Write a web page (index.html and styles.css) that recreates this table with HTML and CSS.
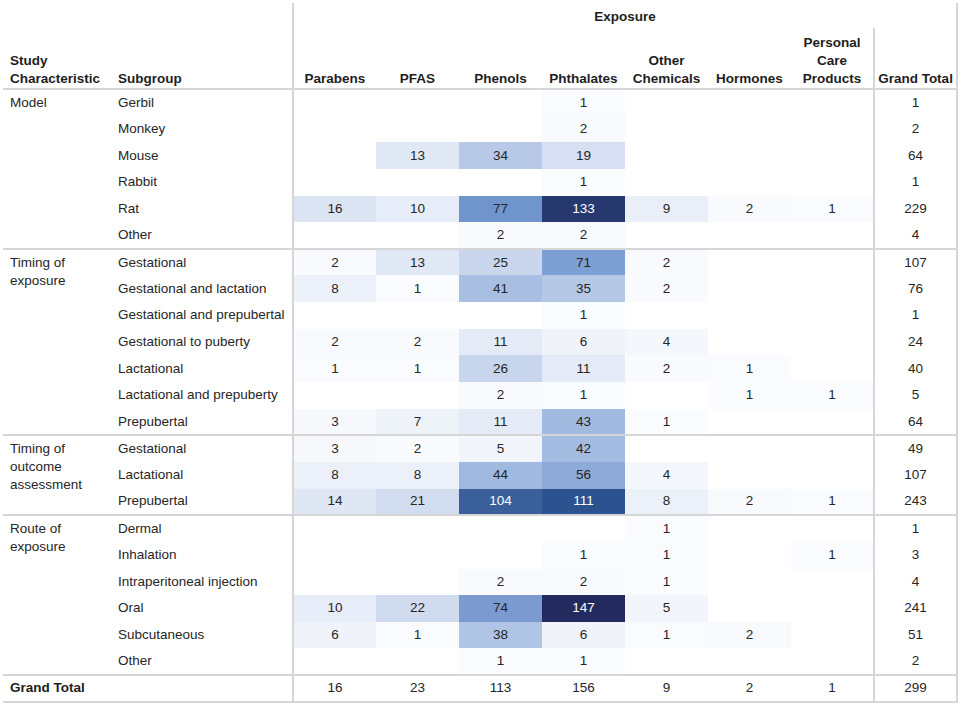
FILE: index.html
```html
<!DOCTYPE html>
<html lang="en">
<head>
<meta charset="utf-8">
<title>Study characteristics by exposure</title>
<link rel="stylesheet" href="styles.css">
</head>
<body>
<table class="pivot">
  <colgroup>
    <col class="c-char"><col class="c-sub">
    <col class="c-num"><col class="c-num"><col class="c-num"><col class="c-num">
    <col class="c-num"><col class="c-num"><col class="c-num"><col class="c-num">
  </colgroup>
  <thead>
    <tr class="h1">
      <th class="lbl" rowspan="2">Study<br>Characteristic</th>
      <th class="lbl" rowspan="2">Subgroup</th>
      <th class="expo" colspan="8">Exposure</th>
    </tr>
    <tr class="h2">
      <th class="col first">Parabens</th>
      <th class="col">PFAS</th>
      <th class="col">Phenols</th>
      <th class="col">Phthalates</th>
      <th class="col">Other<br>Chemicals</th>
      <th class="col">Hormones</th>
      <th class="col">Personal<br>Care<br>Products</th>
      <th class="col gt">Grand Total</th>
    </tr>
  </thead>
  <tbody>
    <tr class="grp"><td class="char" rowspan="6">Model</td><td class="sub">Gerbil</td><td class="n first"></td><td class="n"></td><td class="n"></td><td class="n" style="background:#fafbfe">1</td><td class="n"></td><td class="n"></td><td class="n"></td><td class="n gt">1</td></tr>
    <tr><td class="sub">Monkey</td><td class="n first"></td><td class="n"></td><td class="n"></td><td class="n" style="background:#f8fafd">2</td><td class="n"></td><td class="n"></td><td class="n"></td><td class="n gt">2</td></tr>
    <tr><td class="sub">Mouse</td><td class="n first"></td><td class="n" style="background:#e1e8f5">13</td><td class="n" style="background:#b7c9e7">34</td><td class="n" style="background:#d6e0f2">19</td><td class="n"></td><td class="n"></td><td class="n"></td><td class="n gt">64</td></tr>
    <tr><td class="sub">Rabbit</td><td class="n first"></td><td class="n"></td><td class="n"></td><td class="n" style="background:#fafbfe">1</td><td class="n"></td><td class="n"></td><td class="n"></td><td class="n gt">1</td></tr>
    <tr><td class="sub">Rat</td><td class="n first" style="background:#dbe4f3">16</td><td class="n" style="background:#e7edf8">10</td><td class="n" style="background:#7095cd">77</td><td class="n dk" style="background:#27386e">133</td><td class="n" style="background:#e9eef8">9</td><td class="n" style="background:#f8fafd">2</td><td class="n" style="background:#fafbfe">1</td><td class="n gt">229</td></tr>
    <tr><td class="sub">Other</td><td class="n first"></td><td class="n"></td><td class="n" style="background:#f8fafd">2</td><td class="n" style="background:#f8fafd">2</td><td class="n"></td><td class="n"></td><td class="n"></td><td class="n gt">4</td></tr>

    <tr class="grp"><td class="char" rowspan="7">Timing of<br>exposure</td><td class="sub">Gestational</td><td class="n first" style="background:#f8fafd">2</td><td class="n" style="background:#e1e8f5">13</td><td class="n" style="background:#c9d6ed">25</td><td class="n" style="background:#7e9fd3">71</td><td class="n" style="background:#f8fafd">2</td><td class="n"></td><td class="n"></td><td class="n gt">107</td></tr>
    <tr><td class="sub">Gestational and lactation</td><td class="n first" style="background:#ecf1f9">8</td><td class="n" style="background:#fafbfe">1</td><td class="n" style="background:#a8bee2">41</td><td class="n" style="background:#b5c8e6">35</td><td class="n" style="background:#f8fafd">2</td><td class="n"></td><td class="n"></td><td class="n gt">76</td></tr>
    <tr><td class="sub">Gestational and prepubertal</td><td class="n first"></td><td class="n"></td><td class="n"></td><td class="n" style="background:#fafbfe">1</td><td class="n"></td><td class="n"></td><td class="n"></td><td class="n gt">1</td></tr>
    <tr><td class="sub">Gestational to puberty</td><td class="n first" style="background:#f8fafd">2</td><td class="n" style="background:#f8fafd">2</td><td class="n" style="background:#e4eaf6">11</td><td class="n" style="background:#f0f4fa">6</td><td class="n" style="background:#f4f7fc">4</td><td class="n"></td><td class="n"></td><td class="n gt">24</td></tr>
    <tr><td class="sub">Lactational</td><td class="n first" style="background:#fafbfe">1</td><td class="n" style="background:#fafbfe">1</td><td class="n" style="background:#c7d5ed">26</td><td class="n" style="background:#e4eaf6">11</td><td class="n" style="background:#f8fafd">2</td><td class="n" style="background:#fafbfe">1</td><td class="n"></td><td class="n gt">40</td></tr>
    <tr><td class="sub">Lactational and prepuberty</td><td class="n first"></td><td class="n"></td><td class="n" style="background:#f8fafd">2</td><td class="n" style="background:#fafbfe">1</td><td class="n"></td><td class="n" style="background:#fafbfe">1</td><td class="n" style="background:#fafbfe">1</td><td class="n gt">5</td></tr>
    <tr><td class="sub">Prepubertal</td><td class="n first" style="background:#f6f8fc">3</td><td class="n" style="background:#eef2f9">7</td><td class="n" style="background:#e4eaf6">11</td><td class="n" style="background:#a2bae0">43</td><td class="n" style="background:#fafbfe">1</td><td class="n"></td><td class="n"></td><td class="n gt">64</td></tr>

    <tr class="grp"><td class="char" rowspan="3">Timing of<br>outcome<br>assessment</td><td class="sub">Gestational</td><td class="n first" style="background:#f6f8fc">3</td><td class="n" style="background:#f8fafd">2</td><td class="n" style="background:#f2f5fb">5</td><td class="n" style="background:#a4bce1">42</td><td class="n"></td><td class="n"></td><td class="n"></td><td class="n gt">49</td></tr>
    <tr><td class="sub">Lactational</td><td class="n first" style="background:#ecf1f9">8</td><td class="n" style="background:#ecf1f9">8</td><td class="n" style="background:#a0b9df">44</td><td class="n" style="background:#8eaad9">56</td><td class="n" style="background:#f4f7fc">4</td><td class="n"></td><td class="n"></td><td class="n gt">107</td></tr>
    <tr><td class="sub">Prepubertal</td><td class="n first" style="background:#dfe6f4">14</td><td class="n" style="background:#d3ddf0">21</td><td class="n dk" style="background:#3a5f9a">104</td><td class="n dk" style="background:#2c538f">111</td><td class="n" style="background:#ecf1f9">8</td><td class="n" style="background:#f8fafd">2</td><td class="n" style="background:#fafbfe">1</td><td class="n gt">243</td></tr>

    <tr class="grp"><td class="char" rowspan="6">Route of<br>exposure</td><td class="sub">Dermal</td><td class="n first"></td><td class="n"></td><td class="n"></td><td class="n"></td><td class="n" style="background:#fafbfe">1</td><td class="n"></td><td class="n"></td><td class="n gt">1</td></tr>
    <tr><td class="sub">Inhalation</td><td class="n first"></td><td class="n"></td><td class="n"></td><td class="n" style="background:#fafbfe">1</td><td class="n" style="background:#fafbfe">1</td><td class="n"></td><td class="n" style="background:#fafbfe">1</td><td class="n gt">3</td></tr>
    <tr><td class="sub">Intraperitoneal injection</td><td class="n first"></td><td class="n"></td><td class="n" style="background:#f8fafd">2</td><td class="n" style="background:#f8fafd">2</td><td class="n" style="background:#fafbfe">1</td><td class="n"></td><td class="n"></td><td class="n gt">4</td></tr>
    <tr><td class="sub">Oral</td><td class="n first" style="background:#e7edf8">10</td><td class="n" style="background:#d0dbf0">22</td><td class="n" style="background:#7a9ad0">74</td><td class="n dk" style="background:#232a5e">147</td><td class="n" style="background:#f2f5fb">5</td><td class="n"></td><td class="n"></td><td class="n gt">241</td></tr>
    <tr><td class="sub">Subcutaneous</td><td class="n first" style="background:#f0f4fa">6</td><td class="n" style="background:#fafbfe">1</td><td class="n" style="background:#b0c4e5">38</td><td class="n" style="background:#f0f4fa">6</td><td class="n" style="background:#fafbfe">1</td><td class="n" style="background:#f8fafd">2</td><td class="n"></td><td class="n gt">51</td></tr>
    <tr><td class="sub">Other</td><td class="n first"></td><td class="n"></td><td class="n" style="background:#fafbfe">1</td><td class="n" style="background:#fafbfe">1</td><td class="n"></td><td class="n"></td><td class="n"></td><td class="n gt">2</td></tr>

    <tr class="grp total"><td class="char tot" colspan="2">Grand Total</td><td class="n first">16</td><td class="n">23</td><td class="n">113</td><td class="n">156</td><td class="n">9</td><td class="n">2</td><td class="n">1</td><td class="n gt">299</td></tr>
  </tbody>
</table>
</body>
</html>
```
FILE: styles.css
```css
body {
  margin: 0;
  background: #ffffff;
  font-family: "Liberation Sans", Arial, sans-serif;
  font-size: 13.5px;
  color: #262626;
}

.pivot {
  border-collapse: collapse;
  table-layout: fixed;
  width: 954px;
  margin: 3px 0 0 3px;
}

.c-char { width: 108px; }
.c-sub { width: 182px; }
.c-num { width: 83px; }

.pivot th,
.pivot td {
  padding: 0;
  line-height: 18px;
}

.pivot th {
  font-weight: bold;
  color: #1e1e1e;
  white-space: nowrap;
}

.h1 { height: 25px; }
.h2 { height: 61px; }

.lbl {
  text-align: left;
  vertical-align: bottom;
  padding: 0 0 0 7px !important;
  border-bottom: 2px solid #d6d6d6;
}

.expo {
  text-align: center;
  vertical-align: middle;
  padding-top: 3px !important;
  border-left: 2px solid #d6d6d6;
  border-right: 2px solid #d6d6d6;
}

.col {
  text-align: center;
  vertical-align: bottom;
  border-bottom: 2px solid #d6d6d6;
}

.col.gt {
  border-left: 2px solid #d6d6d6;
  border-right: 2px solid #d6d6d6;
}

.first { border-left: 2px solid #d6d6d6; }

.pivot tbody tr { height: 26.65px; }

.grp td { border-top: 2px solid #d6d6d6; }

.char {
  vertical-align: top;
  padding: 4px 0 0 7px !important;
}

.sub {
  padding-left: 7px !important;
  white-space: nowrap;
}

.n {
  text-align: center;
  vertical-align: middle;
}

.n.dk { color: #ffffff; }

td.gt {
  border-left: 2px solid #d6d6d6;
  border-right: 2px solid #d6d6d6;
}

.total td { border-bottom: 2px solid #d6d6d6; }

.tot {
  font-weight: bold;
  vertical-align: middle;
  padding-top: 0 !important;
  color: #1e1e1e;
}
```
